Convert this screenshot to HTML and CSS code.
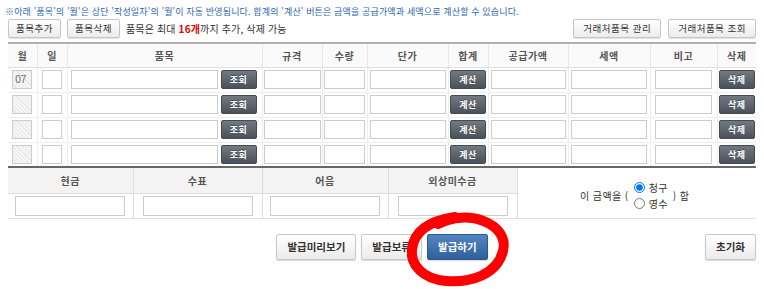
FILE: index.html
```html
<!DOCTYPE html>
<html lang="ko">
<head>
<meta charset="utf-8">
<link rel="stylesheet" href="styles.css">
</head>
<body>
<div class="page">
  <div class="note">※아래 '품목'의 '월'은 상단 '작성일자'의 '월'이 자동 반영됩니다. 합계의 '계산' 버튼은 금액을 공급가액과 세액으로 계산할 수 있습니다.</div>
  <div class="toolbar">
    <button class="btn-light">품목추가</button>
    <button class="btn-light">품목삭제</button>
    <span class="info">품목은 최대 <b class="red">16개</b>까지 추가, 삭제 가능</span>
    <div class="toolbar-right">
      <button class="btn-light btn-wide">거래처품목 관리</button>
      <button class="btn-light btn-wide">거래처품목 조회</button>
    </div>
  </div>

  <table class="items">
    <colgroup>
      <col style="width:29px"><col style="width:30px"><col style="width:195px"><col style="width:60px"><col style="width:45px"><col style="width:81px"><col style="width:40px"><col style="width:80px"><col style="width:82px"><col style="width:67px"><col style="width:39px">
    </colgroup>
    <thead>
      <tr><th>월</th><th>일</th><th>품목</th><th>규격</th><th>수량</th><th>단가</th><th>합계</th><th>공급가액</th><th>세액</th><th>비고</th><th>삭제</th></tr>
    </thead>
    <tbody>
      <tr>
        <td><input class="in in-m" value="07" readonly></td>
        <td><input class="in in-d"></td>
        <td class="name-cell"><div class="name"><input class="in in-name"><button class="btn-dark">조회</button></div></td>
        <td><input class="in in-spec"></td>
        <td><input class="in in-qty"></td>
        <td><input class="in in-price"></td>
        <td><button class="btn-dark">계산</button></td>
        <td><input class="in in-supply"></td>
        <td><input class="in in-tax"></td>
        <td><input class="in in-memo"></td>
        <td class="del-cell"><button class="btn-dark">삭제</button></td>
      </tr>
      <tr>
        <td><input class="in in-m" readonly></td>
        <td><input class="in in-d"></td>
        <td class="name-cell"><div class="name"><input class="in in-name"><button class="btn-dark">조회</button></div></td>
        <td><input class="in in-spec"></td>
        <td><input class="in in-qty"></td>
        <td><input class="in in-price"></td>
        <td><button class="btn-dark">계산</button></td>
        <td><input class="in in-supply"></td>
        <td><input class="in in-tax"></td>
        <td><input class="in in-memo"></td>
        <td class="del-cell"><button class="btn-dark">삭제</button></td>
      </tr>
      <tr>
        <td><input class="in in-m" readonly></td>
        <td><input class="in in-d"></td>
        <td class="name-cell"><div class="name"><input class="in in-name"><button class="btn-dark">조회</button></div></td>
        <td><input class="in in-spec"></td>
        <td><input class="in in-qty"></td>
        <td><input class="in in-price"></td>
        <td><button class="btn-dark">계산</button></td>
        <td><input class="in in-supply"></td>
        <td><input class="in in-tax"></td>
        <td><input class="in in-memo"></td>
        <td class="del-cell"><button class="btn-dark">삭제</button></td>
      </tr>
      <tr>
        <td><input class="in in-m" readonly></td>
        <td><input class="in in-d"></td>
        <td class="name-cell"><div class="name"><input class="in in-name"><button class="btn-dark">조회</button></div></td>
        <td><input class="in in-spec"></td>
        <td><input class="in in-qty"></td>
        <td><input class="in in-price"></td>
        <td><button class="btn-dark">계산</button></td>
        <td><input class="in in-supply"></td>
        <td><input class="in in-tax"></td>
        <td><input class="in in-memo"></td>
        <td class="del-cell"><button class="btn-dark">삭제</button></td>
      </tr>
    </tbody>
  </table>

  <table class="pay">
    <colgroup>
      <col style="width:125px"><col style="width:129px"><col style="width:126px"><col style="width:129px"><col style="width:239px">
    </colgroup>
    <tr>
      <th>현금</th><th>수표</th><th>어음</th><th>외상미수금</th>
      <td rowspan="2" class="claim">
        <div class="claim-box">
          <span>이 금액을 (</span>
          <div class="radios">
            <label><input type="radio" name="c" checked>청구</label>
            <label><input type="radio" name="c">영수</label>
          </div>
          <span>) 함</span>
        </div>
      </td>
    </tr>
    <tr>
      <td><input class="in in-pay"></td>
      <td><input class="in in-pay"></td>
      <td><input class="in in-pay"></td>
      <td><input class="in in-pay"></td>
    </tr>
  </table>

  <div class="actions">
    <div class="actions-center">
      <button class="btn-big">발급미리보기</button>
      <button class="btn-big">발급보류</button>
      <button class="btn-big btn-blue">발급하기</button>
    </div>
    <button class="btn-big btn-reset">초기화</button>
  </div>
</div>
<svg class="mark" width="764" height="289" viewBox="0 0 764 289">
  <path d="M 438 224 C 468 208, 510 224, 503 251 C 497 275, 470 283, 446 281 C 423 279, 410 265, 412 249 C 414 232, 428 221, 455 217" fill="none" stroke="#ff0000" stroke-width="10" stroke-linecap="round"/>
</svg>
</body>
</html>
```

FILE: styles.css
```css
* { box-sizing: border-box; }
html, body { min-height: 289px; }
body {
  margin: 0;
  position: relative;
  font-family: "Noto Sans CJK KR", "Liberation Sans", sans-serif;
  font-size: 10px;
  color: #333;
  background: #fff;
}
.page { width: 764px; padding: 0 8px; }

.note {
  padding-top: 6px;
  margin-left: -3px;
  height: 18px;
  line-height: 12px;
  font-size: 9px;
  letter-spacing: 0.15px;
  color: #2d68b0;
  white-space: nowrap;
}

.toolbar {
  display: flex;
  align-items: center;
  gap: 6px;
  height: 20px;
}
.toolbar-right { margin-left: auto; display: flex; gap: 7px; }
.info { font-size: 10px; color: #333; letter-spacing: 0.15px; }
.red { color: #e00000; font-weight: bold; }

button { font-family: inherit; cursor: pointer; }
.btn-light {
  height: 19px;
  padding: 0 7px;
  border: 1px solid #c6c6c6;
  border-radius: 2px;
  background: linear-gradient(#ffffff, #ececec);
  box-shadow: 0 1px 1px rgba(0,0,0,0.12);
  font-size: 9.5px;
  letter-spacing: 0.5px;
  color: #333;
  line-height: 17px;
  white-space: nowrap;
}
.btn-wide { padding: 0 9px; }

table { border-collapse: collapse; table-layout: fixed; width: 748px; }
.items { margin-top: 4px; border-top: 2px solid #b0b0b0; border-bottom: 2px solid #666; }
.items th {
  height: 24px;
  background: #fafafa;
  color: #555;
  font-weight: bold;
  font-size: 10px;
  letter-spacing: 0.5px;
  border-left: 1px solid #e8e8e8;
  border-bottom: 1px solid #e0e0e0;
  padding: 0;
}
.items th:first-child, .items td:first-child { border-left: none; }
.items td {
  height: 25px;
  padding: 0;
  text-align: center;
  vertical-align: middle;
  border-left: 1px solid #eeeeee;
  border-top: 1px solid #eeeeee;
}
.in {
  height: 19px;
  border: 1px solid #cccccc;
  background: #fff;
  padding: 0 3px;
  font-family: inherit;
  font-size: 10px;
  color: #666;
  vertical-align: middle;
  outline: none;
}
.in-m {
  width: 20px;
  padding: 0 2px;
  background: repeating-linear-gradient(45deg, #f6f6f6 0 2px, #e6e6e6 2px 3px);
  font-family: "Liberation Sans", sans-serif;
  font-size: 10px;
}
.in-d { width: 20px; }
.name-cell { text-align: left; }
.name { display: flex; align-items: center; gap: 3px; padding-left: 3px; }
.in-name { width: 147px; }
.in-spec { width: 57px; }
.in-qty { width: 41px; }
.in-price { width: 76px; }
.in-supply { width: 75px; }
.in-tax { width: 76px; }
.in-memo { width: 57px; }
.del-cell { text-align: right; }

.btn-dark {
  width: 36px;
  height: 19px;
  padding: 0;
  border: 1px solid #454b53;
  border-radius: 2px;
  background: linear-gradient(#737981, #4b5159);
  color: #fff;
  font-weight: bold;
  font-size: 9px;
  letter-spacing: 0.5px;
  line-height: 17px;
  vertical-align: middle;
  text-shadow: 0 -1px 0 rgba(0,0,0,0.3);
}

.pay { border-bottom: 1px solid #e0e0e0; }
.pay th {
  height: 25px;
  padding: 0;
  background: #f3f3f3;
  color: #555;
  font-weight: bold;
  font-size: 10px;
  letter-spacing: 0.5px;
  border-left: 1px solid #dddddd;
  border-bottom: 1px solid #dddddd;
}
.pay th:first-child { border-left: none; }
.pay td {
  height: 25px;
  padding: 0;
  text-align: center;
  vertical-align: middle;
  border-left: 1px solid #dddddd;
}
.pay tr:last-child td:first-child { border-left: none; }
.in-pay { width: 110px; height: 20px; }
.pay .claim { border-left: 1px solid #dddddd; padding-top: 5px; padding-right: 4px; }
.claim-box {
  display: inline-flex;
  align-items: center;
  gap: 5px;
  font-size: 10px;
  letter-spacing: 0.4px;
  color: #333;
}
.radios { display: flex; flex-direction: column; gap: 3px; text-align: left; }
.radios label { display: flex; align-items: center; height: 13px; }
.radios input { width: 11px; height: 11px; margin: 0 4px 0 0; }

.actions {
  display: grid;
  grid-template-columns: 1fr auto 1fr;
  margin-top: 15px;
  align-items: center;
}
.actions-center { grid-column: 2; display: flex; gap: 5px; }
.btn-big {
  height: 26px;
  padding: 0 10px;
  border: 1px solid #c8c8c8;
  border-radius: 2px;
  background: linear-gradient(#ffffff, #ebebeb);
  box-shadow: 0 1px 1px rgba(0,0,0,0.15);
  color: #333;
  font-weight: bold;
  font-size: 10.5px;
  letter-spacing: 0;
  white-space: nowrap;
}
.btn-blue {
  border-color: #2b5a93;
  background: linear-gradient(#5385c2, #2f609b);
  color: #fff;
}
.btn-reset { grid-column: 3; justify-self: end; }

.mark { position: fixed; left: 0; top: 0; pointer-events: none; }
```
